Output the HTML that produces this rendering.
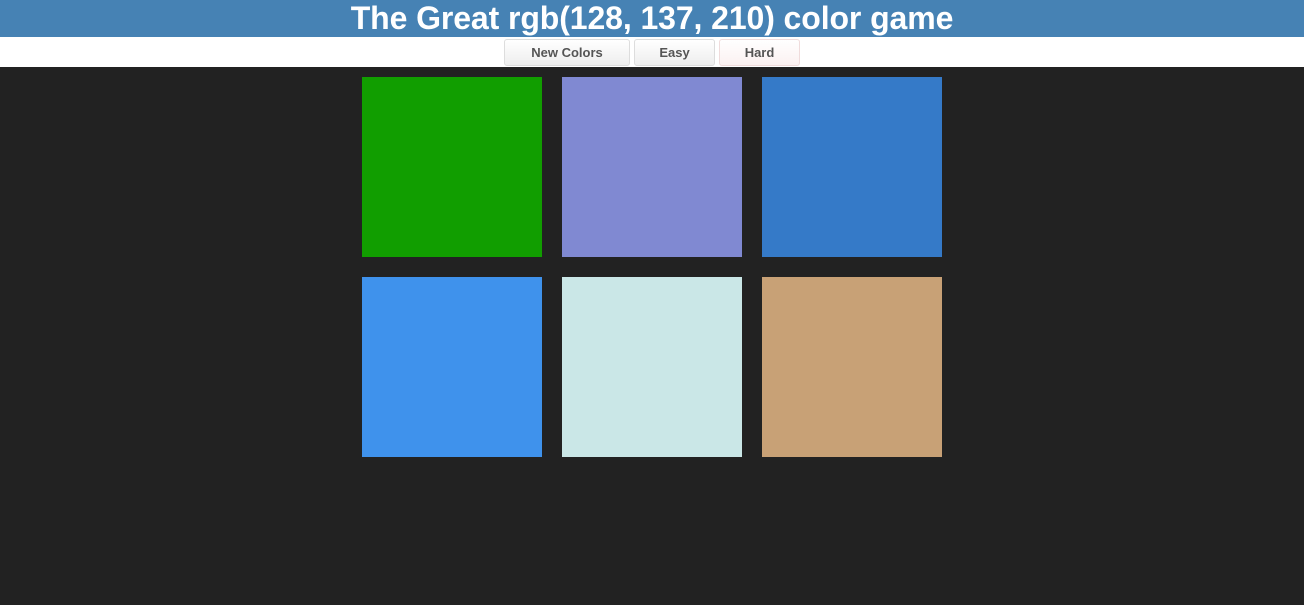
<!DOCTYPE html>
<html><head><style>
body{margin:0;background:#222;width:1304px;height:605px;overflow:hidden;font-family:"Liberation Sans",sans-serif}
h1{margin:0;height:37px;background:#4682b4;color:#fff;text-align:center;font-size:32px;line-height:36px;font-weight:bold;letter-spacing:-0.1px}
.bar{height:30px;background:#fff;position:relative}
.b{position:absolute;top:2px;border:1px solid #ddd;border-radius:3px;background:linear-gradient(#fff,#eee);font-size:13px;font-weight:bold;color:#555;text-align:center;line-height:26px;box-sizing:border-box;height:27px}
.s{position:absolute;width:180px;height:180px}
</style></head><body>
<h1>The Great rgb(128, 137, 210) color game</h1>
<div class="bar">
<div class="b" style="left:504px;width:126px">New Colors</div>
<div class="b" style="left:634px;width:81px">Easy</div>
<div class="b" style="left:719px;width:81px;background:linear-gradient(#fff,#fbf1f1);border-color:#f0dcdc">Hard</div>
</div>
<div class="s" style="left:362px;top:77px;background:#119e00"></div>
<div class="s" style="left:562px;top:77px;background:#8089d2"></div>
<div class="s" style="left:762px;top:77px;background:#357ac8"></div>
<div class="s" style="left:362px;top:277px;background:#3f92ec"></div>
<div class="s" style="left:562px;top:277px;background:#cae7e7"></div>
<div class="s" style="left:762px;top:277px;background:#c8a176"></div>
</body></html>
